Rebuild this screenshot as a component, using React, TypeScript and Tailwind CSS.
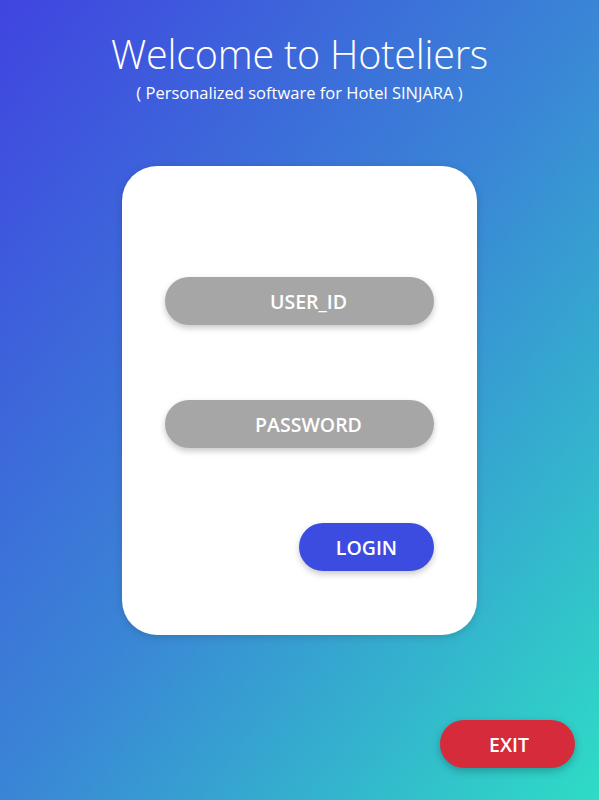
export default function App() {
  const font = { fontFamily: '"Open Sans", "Noto Sans", sans-serif' };
  return (
    <div
      className="w-[599px] h-[800px] flex flex-col items-center bg-[linear-gradient(to_bottom_right,#4044e0,#3a85d6_50%,#2edcc6)] text-white"
      style={font}
    >
      <h1 className="mt-[30px] text-[39.5px] leading-[48px] font-light tracking-[-0.2px]">Welcome to Hoteliers</h1>
      <p className="text-[16.5px] leading-[24px] mt-[3px]">( Personalized software for Hotel SINJARA )</p>
      <div className="mt-[61px] w-[355px] h-[469px] bg-white rounded-[35px] shadow-[0_2px_8px_rgba(0,0,0,0.15)] flex flex-col pl-[43px] pt-[111px]">
        <div className="w-[269px] h-[48px] rounded-full bg-[#a6a6a6] shadow-[0_3px_6px_rgba(0,0,0,0.22)] flex items-center justify-center pl-[18px] pt-[2px] text-[19.5px] font-semibold">
          USER_ID
        </div>
        <div className="mt-[75px] w-[269px] h-[48px] rounded-full bg-[#a6a6a6] shadow-[0_3px_6px_rgba(0,0,0,0.22)] flex items-center justify-center pl-[18px] pt-[2px] text-[19.5px] font-semibold">
          PASSWORD
        </div>
        <div className="mt-[75px] ml-[134px] w-[135px] h-[48px] rounded-full bg-[#3d4ce0] shadow-[0_3px_6px_rgba(0,0,0,0.22)] flex items-center justify-center pt-[2px] text-[19.5px] font-semibold">
          LOGIN
        </div>
      </div>
      <div className="self-end mr-[24px] mt-[85px] w-[135px] h-[48px] rounded-full bg-[#d62b3a] shadow-[0_3px_8px_rgba(0,0,0,0.25)] flex items-center justify-center pl-[3px] pt-[2px] text-[19.5px] font-semibold">
        EXIT
      </div>
    </div>
  );
}
